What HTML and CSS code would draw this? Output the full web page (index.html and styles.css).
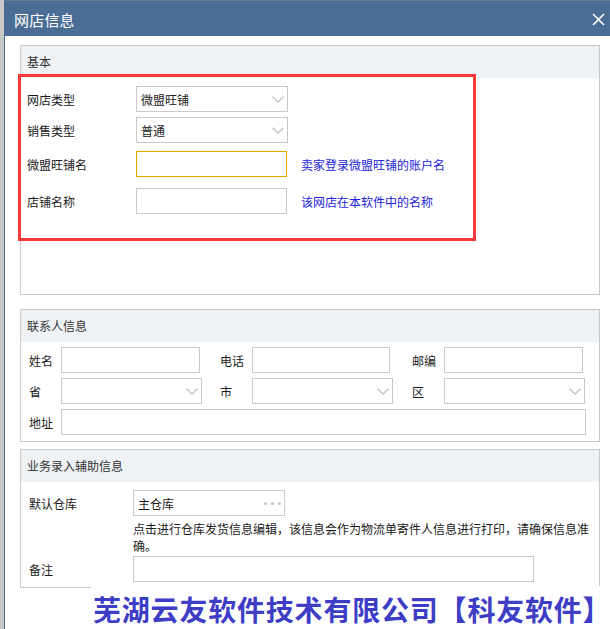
FILE: index.html
```html
<!DOCTYPE html>
<html lang="zh-CN">
<head>
<meta charset="utf-8">
<title>网店信息</title>
<link rel="stylesheet" href="styles.css">
</head>
<body>
<div class="page">
  <div class="strip"></div>
  <div class="dialog">
    <div class="titlebar">
      <span class="title">网店信息</span>
      <svg class="close" width="13" height="13" viewBox="0 0 13 13"><path d="M1 1 L12 12 M12 1 L1 12" stroke="#fff" stroke-width="1.6" fill="none"/></svg>
    </div>
    <div class="content">
      <section class="group g1">
        <div class="group-head">基本</div>
        <div class="g1-body">
          <div class="frow r1">
            <span class="flabel">网店类型</span>
            <div class="box sel w152"><span>微盟旺铺</span><svg class="chev" width="12" height="7" viewBox="0 0 12 7"><path d="M0.5 0.8 L6 6 L11.5 0.8" stroke="#c4c4c4" stroke-width="1.4" fill="none"/></svg></div>
          </div>
          <div class="frow r2">
            <span class="flabel">销售类型</span>
            <div class="box sel w152"><span>普通</span><svg class="chev" width="12" height="7" viewBox="0 0 12 7"><path d="M0.5 0.8 L6 6 L11.5 0.8" stroke="#c4c4c4" stroke-width="1.4" fill="none"/></svg></div>
          </div>
          <div class="frow r3">
            <span class="flabel">微盟旺铺名</span>
            <div class="box w151 focus"></div>
            <span class="hint">卖家登录微盟旺铺的账户名</span>
          </div>
          <div class="frow r4">
            <span class="flabel">店铺名称</span>
            <div class="box w151"></div>
            <span class="hint">该网店在本软件中的名称</span>
          </div>
        </div>
      </section>

      <section class="group g2">
        <div class="group-head">联系人信息</div>
        <div class="g2-body">
          <span class="clabel">姓名</span>
          <div class="box w139"></div>
          <span></span>
          <span class="clabel">电话</span>
          <div class="box w138"></div>
          <span></span>
          <span class="clabel">邮编</span>
          <div class="box w139"></div>

          <span class="clabel">省</span>
          <div class="box sel w141"><span></span><svg class="chev" width="12" height="7" viewBox="0 0 12 7"><path d="M0.5 0.8 L6 6 L11.5 0.8" stroke="#c4c4c4" stroke-width="1.4" fill="none"/></svg></div>
          <span></span>
          <span class="clabel">市</span>
          <div class="box sel w141"><span></span><svg class="chev" width="12" height="7" viewBox="0 0 12 7"><path d="M0.5 0.8 L6 6 L11.5 0.8" stroke="#c4c4c4" stroke-width="1.4" fill="none"/></svg></div>
          <span></span>
          <span class="clabel">区</span>
          <div class="box sel w141"><span></span><svg class="chev" width="12" height="7" viewBox="0 0 12 7"><path d="M0.5 0.8 L6 6 L11.5 0.8" stroke="#c4c4c4" stroke-width="1.4" fill="none"/></svg></div>

          <span class="clabel">地址</span>
          <div class="box addr"></div>
        </div>
      </section>

      <section class="group g3">
        <div class="group-head">业务录入辅助信息</div>
        <div class="g3-body">
          <div class="brow">
            <span class="blabel">默认仓库</span>
            <div class="box sel w152"><span>主仓库</span><span class="dots"><i></i><i></i><i></i></span></div>
          </div>
          <p class="note">点击进行仓库发货信息编辑，该信息会作为物流单寄件人信息进行打印，请确保信息准确。</p>
          <div class="brow remark">
            <span class="blabel">备注</span>
            <div class="box w401"></div>
          </div>
        </div>
      </section>
    </div>
  </div>
</div>
<div class="redbox"></div>
<div class="watermark">芜湖云友软件技术有限公司【科友软件】</div>
</body>
</html>
```

FILE: styles.css
```css
html, body {
  margin: 0;
  padding: 0;
}
body {
  width: 610px;
  height: 629px;
  overflow: hidden;
  font-family: "Noto Sans CJK SC", "Microsoft YaHei", sans-serif;
  font-size: 12px;
  color: #1a1a1a;
  background: #c9c9c9;
}
.page {
  display: flex;
  height: 629px;
}
.strip {
  width: 4px;
  background: #c9c9c9;
}
.dialog {
  flex: 1;
  border-left: 1px solid #4a6d96;
  background: #fff;
}
.titlebar {
  height: 36px;
  box-sizing: border-box;
  background: #4a6d96;
  border-top: 1px solid #6a7c90;
  display: flex;
  align-items: center;
  justify-content: space-between;
  padding: 2px 5px 0 9px;
}
.title {
  color: #fff;
  font-size: 15px;
  letter-spacing: 0.2px;
}
.close {
  display: block;
}
.content {
  padding: 9px 10px 0 15px;
}
.group {
  border: 1px solid #c9c9c9;
  width: 580px;
  box-sizing: border-box;
}
.group-head {
  height: 32px;
  line-height: 32px;
  background: #eef2f5;
  padding-left: 6px;
  color: #333;
}
.box {
  box-sizing: border-box;
  height: 26px;
  border: 1px solid #c9c9c9;
  background: #fff;
}
.sel {
  display: flex;
  align-items: center;
  justify-content: space-between;
  padding: 0 3px 0 4px;
}
.chev {
  display: block;
}
.focus {
  border-color: #f5a300;
}
.w152 { width: 152px; }
.w151 { width: 151px; }
.w141 { width: 141px; }
.w139 { width: 139px; }
.w138 { width: 138px; }
.w401 { width: 401px; }

/* group 1 */
.g1-body {
  height: 216px;
  box-sizing: border-box;
  padding: 8px 0 0 6px;
}
.frow {
  display: flex;
  align-items: center;
}
.r2 { margin-top: 5px; }
.r3 { margin-top: 8px; }
.r4 { margin-top: 11px; }
.flabel {
  width: 109px;
}
.hint {
  margin-left: 14px;
  color: #2323d8;
}

/* group 2 */
.g2 {
  margin-top: 14px;
}
.g2-body {
  display: grid;
  grid-template-columns: 32px 141px 18px 32px 141px 19px 32px 141px;
  row-gap: 5px;
  align-items: center;
  padding: 5px 0 6px 8px;
}
.addr {
  grid-column: 2 / 9;
  width: 525px;
}

/* group 3 */
.g3 {
  margin-top: 7px;
}
.g3-body {
  padding: 8px 0 5px 8px;
}
.brow {
  display: flex;
  align-items: center;
}
.blabel {
  width: 104px;
}
.dots {
  display: flex;
  gap: 4px;
  margin-right: 0;
}
.dots i {
  display: block;
  width: 3px;
  height: 3px;
  border-radius: 50%;
  background: #c4c4c4;
}
.note {
  margin: 4px 0 0 104px;
  width: 462px;
  line-height: 17px;
}
.remark {
  margin-top: 2px;
}

/* overlays */
.redbox {
  position: absolute;
  left: 18px;
  top: 74px;
  width: 458px;
  height: 167px;
  box-sizing: border-box;
  border: 3px solid #f53838;
}
.watermark {
  position: absolute;
  left: 91px;
  top: 586px;
  right: 0;
  bottom: 0;
  background: #fff;
  padding: 9px 0 0 2px;
  font-size: 28px;
  line-height: 28px;
  font-weight: bold;
  letter-spacing: 0.8px;
  color: #3d3dc6;
  white-space: nowrap;
}
```
